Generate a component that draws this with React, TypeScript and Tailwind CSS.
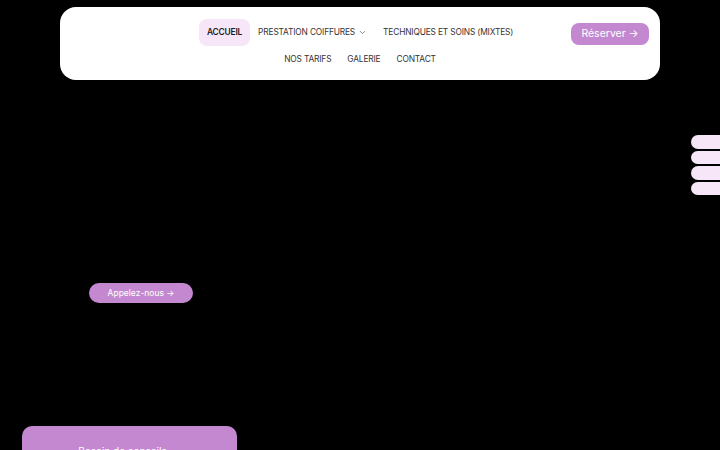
import { ChevronDown } from 'lucide-react';

const font = { fontFamily: 'Inter, "Open Sans", sans-serif' };

function NavItem({ label, active, dropdown }: { label: string; active?: boolean; dropdown?: boolean }) {
  return (
    <a
      href="#"
      className={
        'flex h-[27px] items-center gap-[3px] rounded-[8px] px-2 text-[8.4px] tracking-[-0.02em] uppercase ' +
        (active ? 'bg-[#f6e6f8] font-semibold text-[#1a1a1a]' : 'text-[#333333]')
      }
    >
      {label}
      {dropdown && <ChevronDown className="h-[9px] w-[9px]" strokeWidth={1.5} />}
    </a>
  );
}

export default function App() {
  return (
    <div className="relative h-[450px] w-[720px] overflow-hidden bg-black" style={font}>
      <div className="px-[60px] pt-[7px]">
        <header className="flex h-[73px] items-start rounded-[16px] bg-white px-[11px] pt-[12px]">
          <div className="w-[78px]" />
          <nav className="flex flex-1 flex-col items-center">
            <div className="flex">
              <NavItem label="Accueil" active />
              <NavItem label="Prestation coiffures" dropdown />
              <NavItem label="Techniques et soins (mixtes)" />
            </div>
            <div className="flex">
              <NavItem label="Nos tarifs" />
              <NavItem label="Galerie" />
              <NavItem label="Contact" />
            </div>
          </nav>
          <a
            href="#"
            className="mt-[4px] flex h-[22px] w-[78px] items-center justify-center rounded-[8px] bg-[#c488d1] text-[10.5px] text-white"
          >
            Réserver →
          </a>
        </header>
      </div>

      {/* side tabs */}
      <div className="absolute top-[135px] right-0 flex flex-col gap-[2px]">
        {[0, 1, 2, 3].map((i) => (
          <div key={i} className="h-[13.5px] w-[29px] rounded-l-[7px] bg-[#f6e6f8]" />
        ))}
      </div>

      <div className="pt-[203px] pl-[89px]">
        <a
          href="#"
          className="flex h-[20px] w-[104px] items-center justify-center rounded-full bg-[#c488d1] text-[8.5px] text-white"
        >
          Appelez-nous →
        </a>
      </div>

      <div className="mt-[123px] ml-[22px] h-[60px] w-[215px] rounded-t-[10px] bg-[#c488d1] pt-[18px] pr-[14px] text-center text-[10px] leading-[14px] text-white">
        Besoin de conseils
      </div>
    </div>
  );
}
